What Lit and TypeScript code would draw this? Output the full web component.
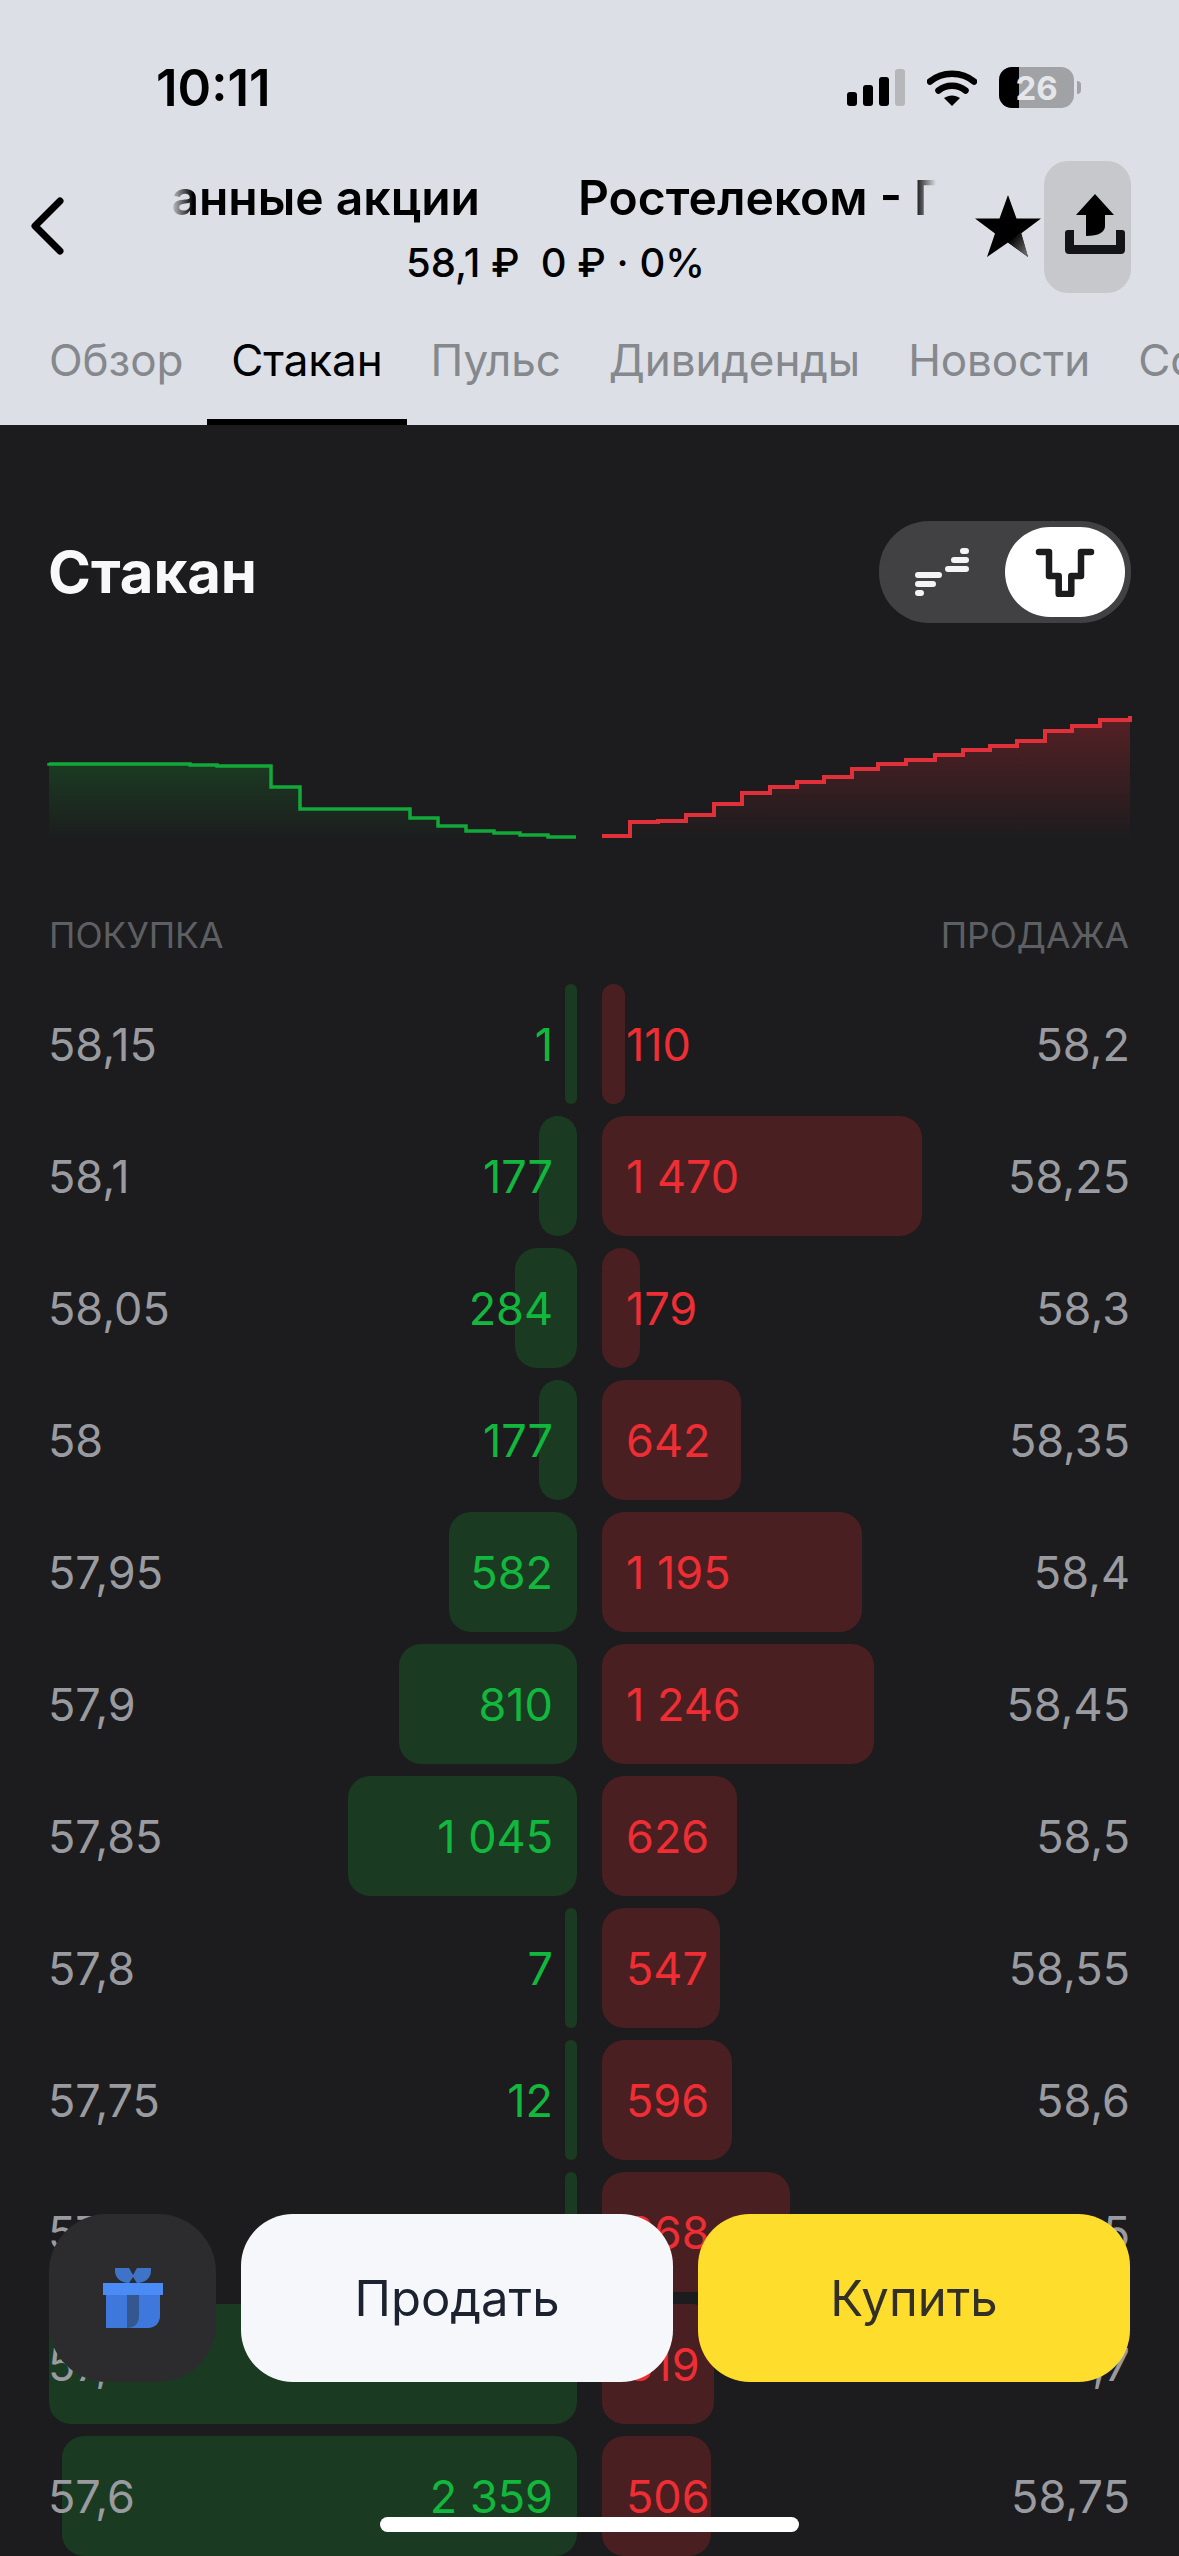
import { LitElement, html, css, svg } from 'lit';
import { customElement } from 'lit/decorators.js';

const TITLE = 'Ростелеком - Привилегированные акции';
const TABS = ['Обзор', 'Стакан', 'Пульс', 'Дивиденды', 'Новости', 'События'];

// price, qty, bar width in px for both sides of the book
const ROWS = [
  { buy: '58,15', buyQty: '1', buyW: 12, sell: '58,2', sellQty: '110', sellW: 23 },
  { buy: '58,1', buyQty: '177', buyW: 38, sell: '58,25', sellQty: '1 470', sellW: 320 },
  { buy: '58,05', buyQty: '284', buyW: 62, sell: '58,3', sellQty: '179', sellW: 38 },
  { buy: '58', buyQty: '177', buyW: 38, sell: '58,35', sellQty: '642', sellW: 139 },
  { buy: '57,95', buyQty: '582', buyW: 128, sell: '58,4', sellQty: '1 195', sellW: 260 },
  { buy: '57,9', buyQty: '810', buyW: 178, sell: '58,45', sellQty: '1 246', sellW: 272 },
  { buy: '57,85', buyQty: '1 045', buyW: 229, sell: '58,5', sellQty: '626', sellW: 135 },
  { buy: '57,8', buyQty: '7', buyW: 12, sell: '58,55', sellQty: '547', sellW: 118 },
  { buy: '57,75', buyQty: '12', buyW: 12, sell: '58,6', sellQty: '596', sellW: 130 },
  { buy: '57,7', buyQty: '3', buyW: 12, sell: '58,65', sellQty: '868', sellW: 188 },
  { buy: '57,65', buyQty: '2 420', buyW: 528, sell: '58,7', sellQty: '519', sellW: 112 },
  { buy: '57,6', buyQty: '2 359', buyW: 515, sell: '58,75', sellQty: '506', sellW: 109 },
];

// depth chart steps: [x end of step, y of step]
const GREEN_STEPS = [
  [49, 763], [190, 764], [217, 765], [271, 766], [300, 787], [410, 809], [438, 818],
  [466, 826], [494, 831], [520, 833], [548, 835], [576, 837],
];
const RED_STEPS = [
  [630, 836], [658, 822], [686, 821], [714, 815], [742, 804], [770, 793], [797, 787],
  [824, 782], [852, 777], [878, 769], [906, 764], [935, 760], [963, 755], [990, 750],
  [1017, 746], [1045, 741], [1072, 731], [1100, 726], [1130, 720],
];

function stepLine(steps: number[][], startX: number) {
  let d = `M${startX} ${steps[0][1]}`;
  steps.forEach(([x, y]) => {
    d += `V${y}H${x}`;
  });
  return d;
}

@customElement('app-root')
export class AppRoot extends LitElement {
  static styles = css`
    :host {
      display: block;
      position: relative;
      width: 1179px;
      height: 2556px;
      overflow: hidden;
      background: #1c1c1e;
      font-family: Inter, 'Noto Sans', sans-serif;
      color: #fff;
    }

    .header {
      background: #dcdfe5;
      height: 425px;
      color: #000;
    }

    .status {
      height: 161px;
      display: flex;
      align-items: flex-start;
      padding: 67px 98px 0 156px;
      box-sizing: border-box;
    }

    .time {
      font-size: 51px;
      line-height: 41px;
      font-weight: 600;
    }

    .status-icons {
      margin-left: auto;
      display: flex;
      gap: 22px;
      align-items: flex-start;
    }

    .signal {
      display: block;
      margin-top: 2px;
    }

    .wifi {
      display: block;
      margin-top: 2px;
    }

    .battery {
      position: relative;
      width: 75px;
      height: 41px;
      border-radius: 13px;
      overflow: hidden;
      background: #a0a2a6;
      display: flex;
      align-items: center;
      justify-content: center;
      font-size: 33px;
      font-weight: 700;
      color: #e4e6ea;
    }

    .battery::before {
      content: '';
      position: absolute;
      left: 0;
      top: 0;
      bottom: 0;
      width: 20px;
      background: #000;
    }

    .battery span {
      position: relative;
    }

    .battery-wrap {
      display: flex;
      align-items: center;
      gap: 3px;
      height: 41px;
    }

    .battery-tip {
      width: 4px;
      height: 13px;
      border-radius: 0 4px 4px 0;
      background: #a0a2a6;
    }

    .nav {
      height: 132px;
      display: flex;
      padding: 0 48px 0 31px;
    }

    .back {
      width: 33px;
      height: 58px;
      margin-top: 36px;
      flex-shrink: 0;
    }

    .title-col {
      width: 767px;
      margin-left: 105px;
      flex-shrink: 0;
      display: flex;
      flex-direction: column;
      align-items: center;
    }

    .marquee {
      width: 767px;
      height: 62px;
      margin-top: 6px;
      display: flex;
      overflow: hidden;
      font-size: 48px;
      line-height: 62px;
      font-weight: 600;
      white-space: nowrap;
      gap: 98px;
      -webkit-mask-image: linear-gradient(90deg, transparent, #000 24px, #000 745px, transparent);
      mask-image: linear-gradient(90deg, transparent, #000 24px, #000 745px, transparent);
    }

    .marquee .first {
      width: 311px;
      flex-shrink: 0;
      display: flex;
      justify-content: flex-end;
    }

    .subtitle {
      margin-top: 11px;
      font-size: 40px;
      line-height: 46px;
      font-weight: 500;
      white-space: pre;
      margin-left: 6px;
    }

    .star {
      width: 66px;
      height: 62px;
      margin: 34px 0 0 39px;
      flex-shrink: 0;
    }

    .share {
      width: 87px;
      height: 132px;
      margin-left: 3px;
      flex-shrink: 0;
      box-sizing: border-box;
      padding: 0 6px 6px 0;
      background: #c6c8cc;
      border-radius: 24px;
      display: flex;
      align-items: center;
      justify-content: flex-end;
    }

    .tabs {
      height: 132px;
      display: flex;
      padding-left: 25px;
      overflow: hidden;
    }

    .tab {
      flex-shrink: 0;
      padding: 0 24px;
      height: 132px;
      box-sizing: border-box;
      font-size: 44px;
      letter-spacing: -0.1px;
      line-height: 134px;
      color: #85888c;
    }

    .tab.active {
      color: #000;
      border-bottom: 6px solid #000;
    }

    .head {
      display: flex;
      justify-content: space-between;
      align-items: center;
      height: 102px;
      margin-top: 96px;
      padding: 0 48px 0 48px;
    }

    h2 {
      margin: 0;
      font-size: 58px;
      line-height: 70px;
      font-weight: 700;
      color: #f8f8fa;
    }

    .toggle {
      width: 252px;
      height: 102px;
      box-sizing: border-box;
      padding: 6px;
      border-radius: 50px;
      background: #414143;
      display: flex;
      align-items: center;
      justify-content: space-between;
    }

    .toggle-left {
      margin-left: 30px;
      display: block;
    }

    .knob {
      width: 120px;
      height: 90px;
      border-radius: 45px;
      background: #fff;
      display: flex;
      align-items: center;
      justify-content: center;
    }

    .chart {
      display: block;
      margin-top: 77px;
    }

    .labels {
      display: flex;
      justify-content: space-between;
      margin: 66px 0 28px;
      padding: 0 50px 0 49px;
      font-size: 35.5px;
      line-height: 40px;
      color: #5e5f62;
    }

    .book {
      padding: 0 50px;
    }

    .row {
      display: grid;
      grid-template-columns: 1fr 1fr;
      column-gap: 25px;
      height: 120px;
      margin-bottom: 12px;
    }

    .side {
      position: relative;
      display: flex;
      justify-content: space-between;
      align-items: center;
      font-size: 45px;
      color: #9a9ba0;
    }

    .side > span {
      position: relative;
    }

    .buy .price {
      margin-left: -2px;
    }

    .sell .price {
      margin-right: -1px;
    }

    .bar {
      position: absolute;
      top: 0;
      bottom: 0;
      border-radius: 22px;
    }

    .buy .bar {
      right: 0;
      background: #1a3b22;
    }

    .sell .bar {
      left: 0;
      background: #4a1f21;
    }

    .buy .qty {
      color: #12b83e;
      margin-right: 24px;
    }

    .sell .qty {
      color: #ee2e34;
      margin-left: 24px;
    }

    .actions {
      position: absolute;
      left: 49px;
      right: 49px;
      top: 2214px;
      height: 168px;
      display: flex;
      gap: 25px;
    }

    .actions > div {
      border-radius: 52px;
      display: flex;
      align-items: center;
      justify-content: center;
      font-size: 49px;
    }

    .actions > .gift {
      width: 167px;
      background: #2c2c2e;
      border-radius: 58px;
    }

    .btn-sell {
      flex: 1;
      background: #f6f7fb;
      color: #1c2230;
    }

    .btn-buy {
      flex: 1;
      background: #ffdd2d;
      color: #333028;
    }

    .home {
      position: absolute;
      left: 380px;
      top: 2517px;
      width: 419px;
      height: 15px;
      border-radius: 8px;
      background: #fff;
    }
  `;

  private renderStatus() {
    return html`
      <div class="status">
        <div class="time">10:11</div>
        <div class="status-icons">
          <svg class="signal" width="58" height="37" viewBox="0 0 58 37">
            <rect x="0" y="23" width="10" height="14" rx="3" fill="#000"></rect>
            <rect x="16" y="16" width="10" height="21" rx="3" fill="#000"></rect>
            <rect x="32" y="8" width="10" height="29" rx="3" fill="#000"></rect>
            <rect x="48" y="0" width="10" height="37" rx="3" fill="#b5b7bb"></rect>
          </svg>
          <svg class="wifi" width="50" height="37" viewBox="0 0 50 37">
            <path d="M3 12.5C15 2 35 2 47 12.5" fill="none" stroke="#000" stroke-width="6.500" stroke-linecap="round"></path>
            <path d="M11.5 21.5C19 15 31 15 38.5 21.5" fill="none" stroke="#000" stroke-width="6.500" stroke-linecap="round"></path>
            <path d="M17 29C22 25.500 28 25.500 33 29L25 37Z" fill="#000"></path>
          </svg>
          <div class="battery-wrap">
            <div class="battery"><span>26</span></div>
            <div class="battery-tip"></div>
          </div>
        </div>
      </div>
    `;
  }

  private renderNav() {
    return html`
      <div class="nav">
        <svg class="back" viewBox="0 0 33 58">
          <path d="M29 4L4 29L29 54" fill="none" stroke="#000" stroke-width="7" stroke-linecap="round" stroke-linejoin="round"></path>
        </svg>
        <div class="title-col">
          <div class="marquee">
            <div class="first"><span>${TITLE}</span></div>
            <span>${TITLE}</span>
          </div>
          <div class="subtitle">58,1 ₽  0 ₽ · 0%</div>
        </div>
        <svg class="star" viewBox="0 0 66 62">
          <defs>
            <linearGradient id="starShade" x1="0.2" y1="0.2" x2="0.9" y2="0.9">
              <stop offset="0" stop-color="#000"></stop>
              <stop offset="1" stop-color="#6a6a6c"></stop>
            </linearGradient>
          </defs>
          <path d="M33 0L41.5 23.5H66L46 38.5L53 62L33 47.5L12 62L20 38.5L0 23.5H24.5Z" fill="#000"></path>
          <path d="M46 37L53 62L33 47.5Z" fill="url(#starShade)"></path>
        </svg>
        <div class="share">
          <svg width="60" height="60" viewBox="0 0 60 60">
            <path d="M30 0L49 21H40V32C40 38 34 42 21 42V21H11Z" fill="#000"></path>
            <path d="M0 39C0 37 1 36 3 36H9V51H51V36H57C59 36 60 37 60 39V56C60 58.500 58.500 60 56 60H4C1.500 60 0 58.500 0 56Z" fill="#141416"></path>
          </svg>
        </div>
      </div>
    `;
  }

  private renderChart() {
    const green = stepLine(GREEN_STEPS, 49);
    const red = stepLine(RED_STEPS, 602);
    return html`
      <svg class="chart" width="1179" height="150" viewBox="0 700 1179 150">
        <defs>
          <linearGradient id="greenFade" x1="0" y1="0" x2="0" y2="1">
            <stop offset="0" stop-color="#1b3b22"></stop>
            <stop offset="1" stop-color="#1c1c1e"></stop>
          </linearGradient>
          <linearGradient id="redFade" x1="0" y1="716" x2="0" y2="840" gradientUnits="userSpaceOnUse">
            <stop offset="0" stop-color="#562024"></stop>
            <stop offset="1" stop-color="#1c1c1e"></stop>
          </linearGradient>
        </defs>
        ${svg`
          <path d="${green}V840H49Z" fill="url(#greenFade)"></path>
          <path d="${red}V716V840H602Z" fill="url(#redFade)"></path>
          <path d="${green}" fill="none" stroke="#12a83a" stroke-width="3.500"></path>
          <path d="${red}V716" fill="none" stroke="#e0303a" stroke-width="4"></path>
        `}
      </svg>
    `;
  }

  render() {
    return html`
      <div class="header">
        ${this.renderStatus()} ${this.renderNav()}
        <div class="tabs">
          ${TABS.map((t) => html`<div class="tab ${t === 'Стакан' ? 'active' : ''}">${t}</div>`)}
        </div>
      </div>

      <div class="head">
        <h2>Стакан</h2>
        <div class="toggle">
          <svg class="toggle-left" width="54" height="48" viewBox="0 0 54 48">
            <g stroke="#f4f4f6" stroke-width="6" stroke-linecap="round">
              <path d="M3 27H24M3 36H18M3 45H6M48 3H51M39 12H51M33 21H51"></path>
            </g>
          </svg>
          <div class="knob">
            <svg width="60" height="50" viewBox="0 0 60 50">
              <path d="M4 5H14V29H23.7V47H36.3V29H46V5H56" fill="none" stroke="#1c1c1e" stroke-width="6.500" stroke-linecap="round" stroke-linejoin="round"></path>
            </svg>
          </div>
        </div>
      </div>

      ${this.renderChart()}

      <div class="labels"><span>ПОКУПКА</span><span>ПРОДАЖА</span></div>

      <div class="book">
        ${ROWS.map(
          (r) => html`
            <div class="row">
              <div class="side buy">
                <div class="bar" style="width:${r.buyW}px"></div>
                <span class="price">${r.buy}</span>
                <span class="qty">${r.buyQty}</span>
              </div>
              <div class="side sell">
                <div class="bar" style="width:${r.sellW}px"></div>
                <span class="qty">${r.sellQty}</span>
                <span class="price">${r.sell}</span>
              </div>
            </div>
          `
        )}
      </div>

      <div class="actions">
        <div class="gift">
          <svg width="60" height="60" viewBox="0 0 60 60">
            <path d="M12 0H26L30 7L34 0H48V3C48 10 42 15 34 15L30 9L26 15C18 15 12 10 12 3Z" fill="#3f73c8"></path>
            <path d="M3 27H57V48C57 55 52 60 45 60H3Z" fill="#3f78dc"></path>
            <path d="M24 27H36V48C36 55 32 60 24 60Z" fill="#34578f"></path>
            <rect x="0" y="15" width="60" height="12" fill="#4a8bf5"></rect>
          </svg>
        </div>
        <div class="btn-sell">Продать</div>
        <div class="btn-buy">Купить</div>
      </div>
      <div class="home"></div>
    `;
  }
}

declare global {
  interface HTMLElementTagNameMap {
    'app-root': AppRoot;
  }
}
